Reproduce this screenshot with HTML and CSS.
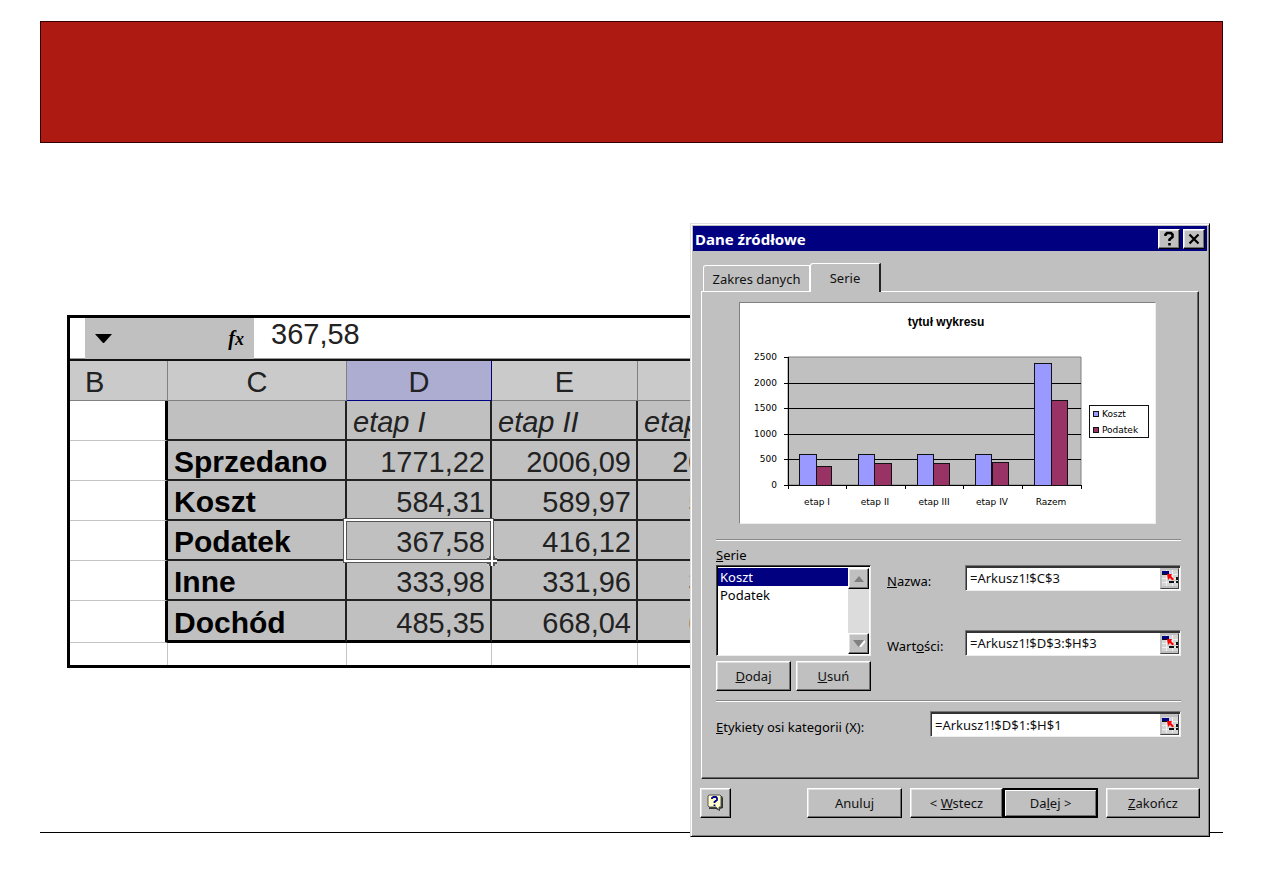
FILE: index.html
```html
<!DOCTYPE html>
<html lang="pl">
<head>
<meta charset="utf-8">
<title>Dane źródłowe</title>
<link rel="stylesheet" href="styles.css">
</head>
<body>
<main class="slide">
  <header class="banner"></header>
  <div class="stage">
    <section class="sheet" aria-label="Arkusz">
      <div class="formula-bar">
        <span class="name-box"></span>
        <span class="formula-tools">
          <svg class="drop" width="18" height="9" viewBox="0 0 18 9" aria-hidden="true"><path d="M0 0H17L9 9H8Z"/></svg>
          <i class="fx">f<b>x</b></i>
        </span>
        <output class="formula">367,58</output>
      </div>
      <table class="cells">
        <colgroup><col class="col-b"><col class="col-c"><col class="col-d"><col class="col-e"><col class="col-e"></colgroup>
        <thead>
          <tr><th class="first">B</th><th>C</th><th class="active">D</th><th>E</th><th></th></tr>
        </thead>
        <tbody>
          <tr class="stages"><td class="blank"></td><td></td><td>etap I</td><td>etap II</td><td>etap III</td></tr>
          <tr><td class="blank"></td><th scope="row">Sprzedano</th><td>1771,22</td><td>2006,09</td><td>2006,09</td></tr>
          <tr><td class="blank"></td><th scope="row">Koszt</th><td>584,31</td><td>589,97</td><td>589,97</td></tr>
          <tr><td class="blank"></td><th scope="row">Podatek</th><td class="selected">367,58<span class="frame"></span><svg class="handle" width="10" height="10" viewBox="0 0 10 10" aria-hidden="true"><path d="M0 0H10V10H0Z" fill="#555"/><path d="M0 0H2V2H0ZM8 0H10V2H8ZM0 8H2V10H0ZM8 8H10V10H8Z" fill="#ccc"/><path d="M4 0H6V4H10V6H6V10H4V6H0V4H4Z" fill="#fff"/></svg></td><td>416,12</td><td></td></tr>
          <tr><td class="blank"></td><th scope="row">Inne</th><td>333,98</td><td>331,96</td><td>331,96</td></tr>
          <tr class="last"><td class="blank"></td><th scope="row">Dochód</th><td>485,35</td><td>668,04</td><td>668,04</td></tr>
          <tr class="below"><td></td><td></td><td></td><td></td><td></td></tr>
        </tbody>
      </table>
    </section>

    <section class="dialog" role="dialog" aria-labelledby="dialog-title">
      <div class="title-bar">
        <h1 id="dialog-title">Dane źródłowe</h1>
        <button class="caption-button" aria-label="Pomoc"><svg width="12" height="15" viewBox="0 0 12 15"><path d="M2.500 5V3.500L4 2H8L9.500 3.500V6L6.500 8.500V10M6.500 12V14.500" fill="none" stroke="#000" stroke-width="2.600"/></svg></button>
        <button class="caption-button" aria-label="Zamknij"><svg width="12" height="12" viewBox="0 0 12 12"><path d="M1.500 1.500L10.500 10.500M10.500 1.500L1.500 10.500" stroke="#000" stroke-width="2.200"/></svg></button>
      </div>
      <div class="tabs" role="tablist">
        <button class="tab" role="tab" aria-selected="false">Zakres danych</button>
        <button class="tab current" role="tab" aria-selected="true">Serie</button>
      </div>
      <div class="panel" role="tabpanel">
        <div class="chart">
          <svg width="415" height="220" viewBox="0 0 415 220" role="img" aria-label="tytuł wykresu">
            <path d="M48 54H341V182H48Z" fill="#c0c0c0" stroke="#808080"/>
            <path d="M44 80.500H341M44 105.500H341M44 131.500H341M44 156.500H341M44 54.500H48M44 182.500H341M48.500 54V186M106.500 182V186M165.500 182V186M223.500 182V186M282.500 182V186M341.500 182V186" fill="none" stroke="#000"/>
            <g fill="#9999ff" stroke="#111">
              <rect x="59.500" y="151.500" width="17" height="31"/>
              <rect x="118.500" y="151.500" width="16" height="31"/>
              <rect x="177.500" y="151.500" width="16" height="31"/>
              <rect x="235.500" y="151.500" width="16" height="31"/>
              <rect x="294.500" y="60.500" width="17" height="122"/>
            </g>
            <g fill="#993366" stroke="#111">
              <rect x="76.500" y="163.500" width="15" height="19"/>
              <rect x="134.500" y="160.500" width="17" height="22"/>
              <rect x="193.500" y="160.500" width="16" height="22"/>
              <rect x="252.500" y="159.500" width="16" height="23"/>
              <rect x="311.500" y="97.500" width="16" height="85"/>
            </g>
            <text class="chart-title" x="206" y="23">tytuł wykresu</text>
            <g class="values">
              <text x="37" y="57">2500</text><text x="37" y="83">2000</text><text x="37" y="108">1500</text><text x="37" y="134">1000</text><text x="37" y="159">500</text><text x="37" y="185">0</text>
            </g>
            <g class="stages-axis">
              <text x="77" y="202">etap I</text><text x="135" y="202">etap II</text><text x="194" y="202">etap III</text><text x="252" y="202">etap IV</text><text x="311" y="202">Razem</text>
            </g>
            <rect x="349.500" y="102.500" width="59" height="32" fill="#fff" stroke="#111"/>
            <rect x="353.500" y="108.500" width="5" height="5" fill="#9999ff" stroke="#111"/>
            <rect x="353.500" y="124.500" width="5" height="5" fill="#993366" stroke="#111"/>
            <g class="legend"><text x="362" y="114">Koszt</text><text x="362" y="130">Podatek</text></g>
          </svg>
        </div>
        <hr class="rule">
        <div class="series">
          <div class="series-list">
            <div class="list-label" id="list-label"><u>S</u>erie</div>
            <div class="list-box">
              <ul role="listbox" aria-labelledby="list-label">
                <li class="chosen" role="option" aria-selected="true">Koszt</li>
                <li role="option" aria-selected="false">Podatek</li>
              </ul>
              <div class="scroll">
                <button class="scroll-button" aria-label="W górę"><svg width="10" height="6" viewBox="0 0 10 6"><path d="M5 0L10 6H0Z" fill="#808080"/></svg></button>
                <button class="scroll-button" aria-label="W dół"><svg width="12" height="7" viewBox="0 0 12 7"><path d="M12 1L7 7" stroke="#fff" stroke-width="2"/><path d="M0 0H11L5.500 7Z" fill="#808080"/></svg></button>
              </div>
            </div>
            <div class="list-actions">
              <button class="button"><span><u>D</u>odaj</span></button>
              <button class="button"><span><u>U</u>suń</span></button>
            </div>
          </div>
          <div class="fields">
            <label for="name"><u>N</u>azwa:</label>
            <div class="range"><input id="name" type="text" value="=Arkusz1!$C$3"><button class="pick" aria-label="Wybierz zakres nazwy"><svg width="16" height="16" viewBox="0 0 16 16"><use href="#pick-icon"/></svg></button></div>
            <label for="values">Wart<u>o</u>ści:</label>
            <div class="range"><input id="values" type="text" value="=Arkusz1!$D$3:$H$3"><button class="pick" aria-label="Wybierz zakres wartości"><svg width="16" height="16" viewBox="0 0 16 16"><use href="#pick-icon"/></svg></button></div>
          </div>
        </div>
        <hr class="rule">
        <div class="category">
          <label for="category"><u>E</u>tykiety osi kategorii (X):</label>
          <div class="range"><input id="category" type="text" value="=Arkusz1!$D$1:$H$1"><button class="pick" aria-label="Wybierz zakres etykiet"><svg width="16" height="16" viewBox="0 0 16 16">
            <g id="pick-icon"><path d="M0 0H16V16H0Z" fill="#d4d4d4"/><path d="M0 4.500H16M0 8.500H16M0 12.500H16M4.500 0V16M10.500 0V16" stroke="#f0f0f0"/><path d="M0 1H7V4H0Z" fill="#000080"/><path d="M0 4H6V5H0ZM7 11H12V13H7ZM14 7H16V10H14ZM14 11H16V13H14Z" fill="#111"/><path d="M5 4H10L9 6L12 9L10.500 10.500L8 8L6 10Z" fill="#f00"/></g>
          </svg></button></div>
        </div>
      </div>
      <footer class="dialog-actions">
        <button class="button help" aria-label="Asystent"><svg width="17" height="18" viewBox="0 0 17 18"><path d="M3 2H15L16 4V14L13 15V17L9 15H2V3Z" fill="#333"/><path d="M2 1H13L14 2V13H12V16L9 13H2L1 12V2Z" fill="#ffffc8" stroke="#555"/><path d="M5 5V4L6.500 3H9L10 4V6L7.500 8V9M7.500 10.500V12" fill="none" stroke="#000090" stroke-width="1.800"/></svg></button>
        <button class="button cancel">Anuluj</button>
        <button class="button back"><span>&lt; <u>W</u>stecz</span></button>
        <button class="button default"><span>Da<u>l</u>ej &gt;</span></button>
        <button class="button finish"><span><u>Z</u>akończ</span></button>
      </footer>
    </section>
  </div>
  <hr class="base-line">
</main>
</body>
</html>
```
FILE: styles.css
```css
* { box-sizing: border-box; }

body {
  margin: 0;
  background: #fff;
  color: #000;
  font-family: "Liberation Sans", Arial, sans-serif;
}

.slide { padding: 21px 40px; }

.banner {
  height: 122px;
  background: #ad1a11;
  border: 1px solid #300;
}

.stage {
  position: relative;
  display: flex;
  align-items: flex-start;
  margin: 80px 13px -5px 27px;
}

.base-line {
  margin: 0;
  border: 0;
  border-top: 1px solid #000;
}

/* Spreadsheet */
.sheet {
  flex: 1;
  min-width: 0;
  margin-top: 92px;
  overflow: hidden;
  border: 3px solid #000;
  border-right: 0;
}

.formula-bar {
  display: flex;
  height: 43px;
  border-bottom: 2px solid #111;
  box-shadow: inset 0 -1px #999;
}

.name-box { width: 15px; }

.formula-tools {
  display: flex;
  align-items: center;
  justify-content: space-between;
  width: 169px;
  padding: 0 10px;
  background: #c0c0c0;
}

.fx {
  font: italic bold 20px "Liberation Serif", serif;
}

.fx b { font-size: 18px; }

.formula {
  padding-left: 17px;
  font-size: 29px;
  line-height: 33px;
  color: #222;
}

.cells {
  table-layout: fixed;
  width: 714px;
  border-spacing: 0;
  font-size: 29px;
  line-height: 34px;
  color: #222;
}

.col-b { width: 98px; }
.col-c { width: 179px; }
.col-d { width: 145px; }
.col-e { width: 146px; }

.cells th, .cells td {
  height: 40px;
  padding: 4px 5px 0 6px;
  border-right: 2px solid #222;
  border-bottom: 2px solid #222;
  background: #c0c0c0;
  text-align: right;
  white-space: nowrap;
}

.cells thead th {
  padding: 2px 2px 0;
  border-right: 1px solid #808080;
  border-bottom: 1px solid #808080;
  background: #cacaca;
  font-weight: normal;
  text-align: center;
}

.cells thead .first { padding-left: 15px; text-align: left; }

.cells thead .active {
  background: #adadd2;
  border-color: #000080;
}

.cells tbody th {
  color: #000;
  font-size: 30px;
  text-align: left;
}

.cells .stages td {
  font-style: italic;
  text-align: left;
}

.cells .blank {
  background: #fff;
  border-right: 3px solid #000;
  border-bottom: 1px solid #c4c4c4;
}

.cells .last th, .cells .last td { height: 42px; border-bottom: 3px solid #000; }
.cells .last .blank { border-bottom: 1px solid #c4c4c4; }

.cells .below td {
  height: 22px;
  padding: 0;
  background: #fff;
  border-right: 1px solid #c4c4c4;
  border-bottom: 0;
}

.selected { position: relative; }

.frame {
  position: absolute;
  inset: -3px -4px -4px -4px;
  border: 1px solid #555;
  box-shadow: inset 0 0 0 2px #fff, inset 0 0 0 3px #555;
}

.handle {
  position: absolute;
  right: -7px;
  bottom: -7px;
}

/* Dialog window */
.dialog {
  flex: 0 0 520px;
  min-width: 0;
  display: flex;
  flex-direction: column;
  padding: 1px 1px 1px 2px;
  border: 1px solid;
  border-color: #dfdfdf #000 #000 #dfdfdf;
  box-shadow: inset 1px 1px #fff, inset -1px -1px #808080;
  background: #c0c0c0;
  font-family: "Noto Sans", sans-serif;
  font-size: 13px;
  line-height: 18px;
}

.dialog button, .dialog input { font: inherit; color: #111; }

.title-bar {
  display: flex;
  align-items: center;
  gap: 3px;
  height: 25px;
  margin: 1px 1px 0 0;
  padding: 0 2px;
  background: #000080;
}

.title-bar h1 {
  flex: 1;
  margin: 0;
  color: #fff;
  font: bold 15px "Noto Sans", sans-serif;
}

.caption-button, .button, .scroll-button, .pick {
  display: flex;
  align-items: center;
  justify-content: center;
  padding: 0;
  border: 1px solid;
  border-color: #fff #000 #000 #fff;
  background: #c0c0c0;
  box-shadow: inset -1px -1px #707070, inset 1px 1px #e0e0e0;
}

.caption-button { width: 22px; height: 20px; }

.tabs {
  display: flex;
  align-items: flex-end;
  margin: 12px 8px 0 10px;
}

.tab {
  height: 26px;
  width: 107px;
  padding: 0;
  border: 1px solid #fff;
  border-bottom: 0;
  border-radius: 3px 0 0 0;
  background: #c0c0c0;
}

.tab.current {
  position: relative;
  width: 71px;
  height: 29px;
  margin-bottom: -1px;
  border-right: 2px solid #222;
}

.panel {
  height: 488px;
  margin: 0 9px 0 8px;
  padding: 10px 17px 10px 14px;
  border: 1px solid;
  border-color: #fff #222 #222 #fff;
  box-shadow: inset -1px -1px #666;
}

.chart {
  width: 417px;
  margin-left: 23px;
  border: 1px solid;
  border-color: #808080 #eee #eee #808080;
  background: #fff;
}

.chart svg { display: block; }

.chart text { font: 9px "DejaVu Sans", sans-serif; }
.chart .chart-title { font: bold 12px "Liberation Sans", sans-serif; text-anchor: middle; }
.chart .values text { text-anchor: end; }
.chart .stages-axis text { text-anchor: middle; }

.rule {
  height: 2px;
  margin: 15px 0 0;
  border: 0;
  border-top: 1px solid #888;
  border-bottom: 1px solid #fff;
}

.series {
  display: flex;
  gap: 16px;
}

.series-list { width: 155px; }
.list-label { height: 24px; padding-top: 5px; }

.list-box {
  display: flex;
  height: 91px;
  border: 1px solid;
  border-color: #444 #eee #eee #444;
  box-shadow: inset 1px 1px #000;
  background: #fff;
  padding: 2px 1px 1px 1px;
}

.list-box ul {
  flex: 1;
  margin: 0;
  padding: 0;
  list-style: none;
}

.list-box li { height: 18px; padding-left: 2px; }
.list-box .chosen { background: #000080; color: #fff; }

.scroll {
  display: flex;
  flex-direction: column;
  justify-content: space-between;
  width: 21px;
  background: #dcdcdc;
}

.scroll-button { height: 21px; }

.list-actions {
  display: flex;
  gap: 5px;
  margin-top: 5px;
}

.list-actions .button { flex: 1; height: 30px; }

.fields {
  flex: 1;
  display: grid;
  grid-template-columns: 62px 1fr;
  grid-template-rows: 27px 27px;
  gap: 38px 16px;
  align-content: start;
  align-items: center;
  padding-top: 23px;
}

.fields label { padding-top: 6px; white-space: nowrap; }

.range {
  display: flex;
  height: 26px;
  border: 1px solid;
  border-color: #777 #eee #eee #777;
  box-shadow: inset 1px 2px #333;
  background: #fff;
  padding: 2px 1px 1px 2px;
}

.range input {
  flex: 1;
  min-width: 0;
  padding: 0 2px;
  border: 0;
  background: transparent;
  outline: 0;
}

.pick {
  width: 19px;
  border-color: #c0c0c0 #444 #444 #c0c0c0;
  box-shadow: none;
}

.series + .rule { margin-top: 9px; }

.category {
  display: flex;
  align-items: flex-start;
  justify-content: space-between;
  margin-top: 9px;
}

.category label { padding-top: 7px; }
.category .range { width: 251px; }

.dialog-actions {
  display: flex;
  margin: 9px 8px 17px 7px;
}

.button { height: 30px; width: 95px; }
.help { width: 31px; }
.cancel { margin-left: 76px; }
.back { margin-left: 8px; width: 93px; }
.default { border: 2px solid #000; box-shadow: inset 1px 1px #fff, inset -1px -1px #707070; }
.finish { flex: 1; margin-left: 8px; }
```
